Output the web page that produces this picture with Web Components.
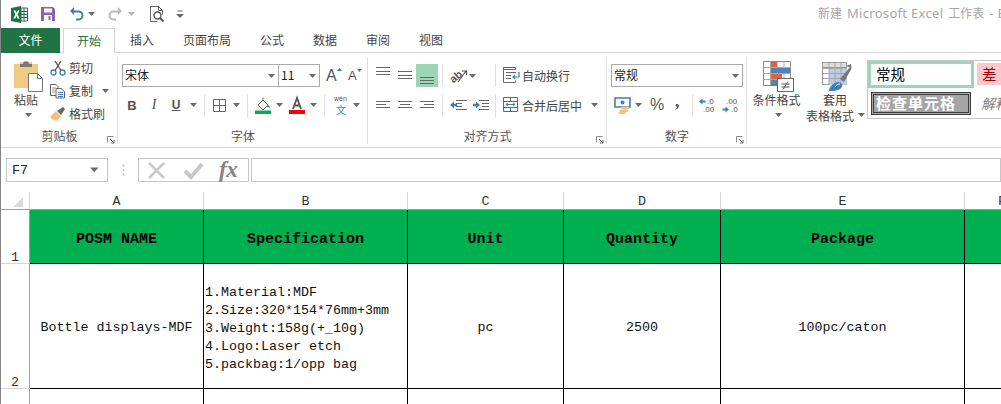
<!DOCTYPE html>
<html lang="zh"><head><meta charset="utf-8"><title>Excel</title>
<style>
html,body{margin:0;padding:0;background:#fff;overflow:hidden;width:1001px;height:404px}
body{font:12px "Noto Sans CJK SC","Noto Sans",sans-serif;color:#444}
</style></head><body>
<x-app>
  <x-titlebar></x-titlebar>
  <x-tabs></x-tabs>
  <x-ribbon>
    <x-group w="117" label="剪贴板" launcher="1">
      <x-row>
        <x-col w="30" style="margin-left:13px">
          <x-i n="paste" w="30" h="30" style="margin-top:5px"></x-i>
          <x-t style="width:30px;line-height:18px">粘贴</x-t>
          <x-i n="caret" w="7" h="4" style="margin-top:4px;margin-left:-2px"></x-i>
        </x-col>
        <x-col w="70" style="margin-left:6px;align-items:flex-start">
          <x-row h="23"><x-i n="cut" w="16" h="16"></x-i><x-t style="margin-left:3px">剪切</x-t></x-row>
          <x-row h="23"><x-i n="copy" w="16" h="16"></x-i><x-t style="margin-left:3px">复制</x-t><x-i n="caret" w="7" h="4" style="margin-left:9px"></x-i></x-row>
          <x-row h="23"><x-i n="brush" w="16" h="16"></x-i><x-t style="margin-left:3px">格式刷</x-t></x-row>
        </x-col>
      </x-row>
    </x-group>
    <x-group w="250" label="字体">
      <x-col style="align-items:flex-start">
        <x-row h="23" style="margin-top:8px">
          <x-combo w="157" text="宋体" style="margin-left:4px"></x-combo>
          <x-combo w="42" text="11" style="margin-left:-1px"></x-combo>
          <x-t style="margin-left:6px;width:15px;font:16px 'Liberation Sans';color:#555;position:relative">A<x-i n="tri-up" w="5" h="3" style="position:absolute;right:-1px;top:1px"></x-i></x-t>
          <x-t style="margin-left:7px;width:15px;font:13px 'Liberation Sans';color:#555;position:relative">A<x-i n="tri-down" w="5" h="3" style="position:absolute;right:1px;top:1px"></x-i></x-t>
        </x-row>
        <x-row h="22" style="margin-top:7px">
          <x-t style="margin-left:3px;width:22px;text-align:center;font:bold 13px 'Liberation Sans';color:#555">B</x-t>
          <x-t style="width:22px;text-align:center;font:italic 14px 'Liberation Serif';color:#555">I</x-t>
          <x-t style="width:22px;text-align:center;font:bold 12px 'Liberation Sans';color:#555;text-decoration:underline">U</x-t>
          <x-i n="caret" w="7" h="4" style="margin-left:3px"></x-i>
          <x-sep style="margin-left:7px"></x-sep>
          <x-i n="borders" w="13" h="13" style="margin-left:8px"></x-i>
          <x-i n="caret" w="7" h="4" style="margin-left:7px"></x-i>
          <x-sep style="margin-left:7px"></x-sep>
          <x-i n="fill" w="17" h="17" style="margin-left:7px"></x-i>
          <x-i n="caret" w="7" h="4" style="margin-left:4px"></x-i>
          <x-i n="fontcolor" w="16" h="17" style="margin-left:6px"></x-i>
          <x-i n="caret" w="7" h="4" style="margin-left:5px"></x-i>
          <x-sep style="margin-left:7px"></x-sep>
          <x-i n="wen" w="14" h="17" style="margin-left:9px"></x-i>
          <x-i n="caret" w="7" h="4" style="margin-left:5px"></x-i>
        </x-row>
      </x-col>
    </x-group>
    <x-group w="239" label="对齐方式" launcher="1">
      <x-col style="align-items:flex-start">
        <x-row h="23" style="margin-top:8px">
          <x-i n="al-top" w="14" h="23" style="margin-left:8px"></x-i>
          <x-i n="al-mid" w="14" h="23" style="margin-left:8px"></x-i>
          <x-i n="al-bot" w="22" h="23" style="margin-left:4px;background:#9fd5b7"></x-i>
          <x-sep style="margin-left:4px"></x-sep>
          <x-i n="orient" w="18" h="17" style="margin-left:7px"></x-i>
          <x-i n="caret" w="7" h="4" style="margin-left:1px"></x-i>
          <x-sep style="margin-left:19px"></x-sep>
          <x-i n="wrap" w="17" h="17" style="margin-left:7px"></x-i>
          <x-t style="margin-left:2px">自动换行</x-t>
        </x-row>
        <x-row h="22" style="margin-top:7px">
          <x-i n="h-left" w="14" h="22" style="margin-left:8px"></x-i>
          <x-i n="h-mid" w="14" h="22" style="margin-left:8px"></x-i>
          <x-i n="h-right" w="14" h="22" style="margin-left:8px"></x-i>
          <x-sep style="margin-left:8px"></x-sep>
          <x-i n="ind-l" w="17" h="12" style="margin-left:7px"></x-i>
          <x-i n="ind-r" w="16" h="12" style="margin-left:6px"></x-i>
          <x-sep style="margin-left:6px"></x-sep>
          <x-i n="merge" w="16" h="16" style="margin-left:7px"></x-i>
          <x-t style="margin-left:3px">合并后居中</x-t>
          <x-i n="caret" w="7" h="4" style="margin-left:9px"></x-i>
        </x-row>
      </x-col>
    </x-group>
    <x-group w="140" label="数字" launcher="1">
      <x-col style="align-items:flex-start">
        <x-row h="23" style="margin-top:8px"><x-combo w="132" text="常规" style="margin-left:4px"></x-combo></x-row>
        <x-row h="22" style="margin-top:7px">
          <x-i n="currency" w="17" h="17" style="margin-left:7px"></x-i>
          <x-i n="caret" w="7" h="4" style="margin-left:4px"></x-i>
          <x-t style="margin-left:8px;width:14px;font:16px 'Liberation Sans';color:#555">%</x-t>
          <x-t style="margin-left:11px;width:8px;font:bold 18px 'Liberation Serif';color:#555;line-height:14px;padding-bottom:8px">,</x-t>
          <x-sep style="margin-left:9px"></x-sep>
          <x-i n="dec-inc" w="17" h="16" style="margin-left:6px"></x-i>
          <x-i n="dec-dec" w="17" h="16" style="margin-left:6px"></x-i>
        </x-row>
      </x-col>
    </x-group>
    <x-group w="254" plain="1">
      <x-row>
        <x-col w="49" style="margin-left:5px">
          <x-i n="cond" w="31" h="30" style="margin-top:5px;margin-left:3px"></x-i>
          <x-t style="line-height:18px;white-space:nowrap">条件格式</x-t>
          <x-i n="caret" w="7" h="4" style="margin-top:4px;margin-left:4px"></x-i>
        </x-col>
        <x-col w="58" style="margin-left:5px;align-items:flex-start">
          <x-i n="table" w="30" h="29" style="margin-top:6px;margin-left:16px"></x-i>
          <x-t style="line-height:18px;margin-left:17px">套用</x-t>
          <x-row h="14" style="margin-top:-1px"><x-t>表格格式</x-t><x-i n="caret" w="7" h="4" style="margin-left:4px"></x-i></x-row>
        </x-col>
        <x-gallery style="margin-left:3px;margin-top:4px"></x-gallery>
      </x-row>
    </x-group>
  </x-ribbon>
  <x-formula name="F7"></x-formula>
  <x-sheet></x-sheet>
</x-app>
<script>
const lines=(ys,x1,x2,c='#666')=>ys.map(y=>`<path d="M${x1} ${y+.5}H${x2}" stroke="${c}"/>`).join('');
const ICONS={
 caret:`<path d="M0 0h7L3.5 4z" fill="#6a6a6a"/>`,
 'tri-up':`<path d="M0 3h5L2.5 0z" fill="#3a7ab8"/>`,
 'tri-down':`<path d="M0 0h5L2.5 3z" fill="#3a7ab8"/>`,
 excel:`<path d="M0 2 10 0v17L0 15z" fill="#1e7145"/><path d="M10 2h6.5v13H10z" fill="#fff" stroke="#1e7145"/><path d="M10 5.5h6M10 8.5h6M10 11.5h6M13 2v13" stroke="#1e7145"/><path d="M2.5 4.5h2l1 2.3 1.100-2.300h1.900L6.600 8.400l2 4h-2L5.400 10l-1.200 2.400h-1.900l2.100-4z" fill="#fff"/>`,
 save:`<path d="M0 0h12l2 2v12H0z" fill="#8a63ad"/><path d="M3 1.500h8v4H3z" fill="#fff"/><path d="M3 8h8v6H3z" fill="#fff"/><path d="M7.500 9h2v4h-2z" fill="#8a63ad"/>`,
 undo:`<path d="M5 1 1 5l4 4V6.400h4.500a3 3 0 0 1 0 6H7v2h2.500a5 5 0 0 0 0-10H5z" fill="#3d7ebb"/>`,
 redo:`<path d="M9 1l4 4-4 4V6.400H4.500a3 3 0 0 0 0 6H7v2H4.500a5 5 0 0 1 0-10H9z" fill="#bcbcbc"/>`,
 preview:`<path d="M.5 .5h8l4 4v4M.5 .5v15h7" fill="none" stroke="#666"/><path d="M8.500 .5v4h4" fill="none" stroke="#666"/><circle cx="7.500" cy="9.500" r="3.500" fill="#fff" stroke="#555" stroke-width="1.400"/><path d="M10 12l3.500 3.500" stroke="#555" stroke-width="2"/>`,
 qat:`<path d="M1.500 1h5" stroke="#666"/><path d="M0 4h8L4 8z" fill="#666"/>`,
 paste:`<path d="M0 3h6V1h12v2h6v24H0z" fill="#f0cb85"/><path d="M6 3h3l1-2.500h4L15 3h3v3H6z" fill="#777"/><path d="M14.500 12.500h9l5 5v13h-14z" fill="#fff" stroke="#777"/><path d="M23.500 12.500v5h5" fill="none" stroke="#777"/>`,
 cut:`<circle cx="3.500" cy="12.500" r="2.500" fill="none" stroke="#3d7ebb" stroke-width="1.300"/><circle cx="12.500" cy="12.500" r="2.500" fill="none" stroke="#3d7ebb" stroke-width="1.300"/><path d="M5 10.500 11 1M11 10.500 5 1" stroke="#555" stroke-width="1.400"/>`,
 copy:`<path d="M.5 1.500h5.500l2 2v9h-7.500z" fill="#fff" stroke="#666"/><path d="M6 5.500h5l3.500 3v6.500H6z" fill="#fff" stroke="#666"/><path d="M8 9.500h5M8 11.500h5M8 13.500h5" stroke="#3d7ebb"/><path d="M2 5h4M2 7h3M2 9h3" stroke="#999"/>`,
 brush:`<path d="M0 11 6 5l5 5-4 5-2-1-1 1-1-2-1 .5z" fill="#eec27b"/><path d="M7 5 13 1l2 2-4 6z" fill="#666"/>`,
 borders:`<path d="M.5 .5h12v12H.5zM6.500 .5v12M.5 6.500h12" fill="none" stroke="#666"/>`,
 fill:`<path d="M3 8 8 3l5 5-5 5z" fill="#fff" stroke="#666"/><path d="M8 .5v4" stroke="#666"/><path d="M12 8c2 0 3 1 3 3-1-1-2-1-3-1z" fill="#3d7ebb"/><path d="M0 13.500h16V17H0z" fill="#00b050"/>`,
 fontcolor:`<path d="M0 13h16v4H0z" fill="#f00"/><path d="M4 12 8 1l4 11M5.500 8.500h5" fill="none" stroke="#555" stroke-width="1.800"/>`,
 wen:`<text x="0" y="4" font-size="7" font-family="Liberation Sans" fill="#555">wén</text><text x="2" y="17" font-size="10" font-family="Noto Sans CJK SC" fill="#3d7ebb">文</text>`,
 'al-top':`<g transform="translate(0,3)">${lines([0,4,7],0,14)}</g>`,
 'al-mid':`<g transform="translate(0,7)">${lines([0,4,7],0,14)}</g>`,
 'al-bot':`<g transform="translate(4,13)">${lines([0,3,6],0,14)}</g>`,
 'h-left':`<g transform="translate(0,7)"><path d="M0 .5H14M0 3.500H10M0 6.500H14" stroke="#666"/></g>`,
 'h-mid':`<g transform="translate(0,7)"><path d="M0 .5H14M2 3.500H12M0 6.500H14" stroke="#666"/></g>`,
 'h-right':`<g transform="translate(0,7)"><path d="M0 .5H14M4 3.500H14M0 6.500H14" stroke="#666"/></g>`,
 orient:`<text x="-1" y="13" font-size="11" font-family="Liberation Sans" font-weight="bold" fill="#555" transform="rotate(-40 6 9)">ab</text><path d="M8 15 16 4M12 4h4.500v4" fill="none" stroke="#555" stroke-width="1.200"/>`,
 wrap:`<path d="M.5 .5h12v2H.5zM.5 .5v15h12v-2" fill="none" stroke="#666"/><path d="M3 5.500h10M3 8.500h5M3 11.500h5" stroke="#666"/><path d="M16 5v5h-6M12 8l-2 2 2 2" fill="none" stroke="#3d7ebb" stroke-width="1.200"/>`,
 'ind-l':`<path d="M5 4.500h6M5 7.500h6M5 1.500h11M5 10.500h11" transform="translate(1 0)" stroke="#666"/><path d="M0 6l4-3.500v2.200h3v2.600H4v2.200z" fill="#3d7ebb"/>`,
 'ind-r':`<path d="M6 1.500h10M9 4.500h7M9 7.500h7M6 10.500h10" stroke="#666"/><path d="M7 6 3 2.500v2.200H0v2.600h3v2.200z" fill="#3d7ebb"/>`,
 merge:`<path d="M.5 .5h14v14H.5zM.5 4.500h14M.5 10.500h14M7.500 .5v4M7.500 10.500v4" fill="none" stroke="#666"/><path d="M3 7.500h9M3 7.500l2-1.500M3 7.500l2 1.500M12 7.500l-2-1.500M12 7.500l-2 1.500" fill="none" stroke="#3d7ebb"/>`,
 currency:`<path d="M1 1h15v9H1z" fill="none" stroke="#3d7ebb" stroke-width="1.600"/><circle cx="8.500" cy="5.500" r="2" fill="#3d7ebb"/><ellipse cx="11" cy="11" rx="4.500" ry="1.400" fill="#eec27b"/><ellipse cx="9.500" cy="14" rx="4.500" ry="1.400" fill="#eec27b"/><ellipse cx="8" cy="16" rx="4" ry="1" fill="#eec27b"/>`,
 'dec-inc':`<path d="M0 4.500 3.500 1.500v2h3v2h-3v2z" fill="#3d7ebb"/><text x="8" y="7" font-size="8" font-family="Liberation Sans" fill="#555">.0</text><text x="4" y="15" font-size="8" font-family="Liberation Sans" fill="#555">.00</text>`,
 'dec-dec':`<text x="4" y="7" font-size="8" font-family="Liberation Sans" fill="#555">.00</text><path d="M7 12.500 3.500 9.500v2h-3v2h3v2z" fill="#3d7ebb"/><text x="9" y="15" font-size="8" font-family="Liberation Sans" fill="#555">.0</text>`,
 cond:`<path d="M.5 .5h27v24H.5z" fill="#fff" stroke="#888"/><path d="M.5 6.500h27M.5 12.500h27M.5 18.500h27M7.500 .5v24M14 .5v24M21 .5v24" stroke="#aaa"/><path d="M8 1h6v5H8z" fill="#e0633c"/><path d="M8 7h19v5H8z" fill="#4f81bd"/><path d="M8 13h11v5H8z" fill="#e0633c"/><path d="M8 19h6v6H8z" fill="#4f81bd"/><path d="M14.500 17.500h16v13h-16z" fill="#fff" stroke="#666"/><path d="M18.500 23h8M18.500 26h8M25 20.500l-5 8" stroke="#555" fill="none"/>`,
 table:`<path d="M.5 .5h24v22H.5z" fill="#fff" stroke="#999"/><path d="M.5 .5h24v5H.5z" fill="#ddd" stroke="#999"/><path d="M7 6h18v17H7z" fill="#b9cde5"/><path d="M.5 6.500h24M.5 11.500h24M.5 16.500h24M7 .5v22M13 .5v22M19 .5v22" stroke="#a9a9a9"/><path d="M18 17 28 5l1.500 1.500L22 20z" fill="#777"/><path d="M24 4 29 2l.5 4z" fill="#777"/><path d="M7 29c0-4 3-6 6-8 3-2 5-1 7 1 1 2-1 5-4 6-3 1-6 1-9 1z" fill="#3d7ebb"/><path d="M13 25c1-2 3-3 5-3" stroke="#fff" fill="none"/>`,
 cross:`<path d="M1 1l15 15M16 1 1 16" stroke="#c8c8c8" stroke-width="2.500"/>`,
 check:`<path d="M1 9l6 6L18 2" fill="none" stroke="#c8c8c8" stroke-width="4"/>`,
 launcher:`<path d="M.5 .5h6M.5 .5v6" stroke="#8a8a8a" fill="none"/><path d="M3 3l4 4M7 4v3H4" stroke="#666" fill="none"/>`,
 corner:`<path d="M10 0v10H0z" fill="#dcdcdc"/>`,
 dots:`<circle cx="1.500" cy="1.500" r="1" fill="#b5b5b5"/><circle cx="1.500" cy="6" r="1" fill="#b5b5b5"/><circle cx="1.500" cy="10.500" r="1" fill="#b5b5b5"/>`
};
const def=(name,fn)=>customElements.define(name,class extends HTMLElement{
  constructor(){super();this.attachShadow({mode:'open'});}
  connectedCallback(){this.shadowRoot.innerHTML=fn(this);}
});
def('x-i',e=>{const w=e.getAttribute('w'),h=e.getAttribute('h');
  return `<style>:host{display:block;flex:none;width:${w}px;height:${h}px;line-height:0}svg{display:block;overflow:visible}</style><svg width="${w}" height="${h}" viewBox="0 0 ${w} ${h}">${ICONS[e.getAttribute('n')]}</svg>`;});
def('x-t',()=>`<style>:host{display:block;flex:none;white-space:nowrap;color:#444}</style><slot></slot>`);
def('x-sep',()=>`<style>:host{display:block;flex:none;width:1px;height:23px;background:#e1e1e1}</style>`);
def('x-row',e=>{const h=e.getAttribute('h');return `<style>:host{display:flex;flex:none;${h?`height:${h}px;align-items:center;`:'align-items:flex-start;'}}</style><slot></slot>`;});
def('x-col',e=>{const w=e.getAttribute('w');return `<style>:host{display:flex;flex-direction:column;align-items:center;flex:none;${w?`width:${w}px;`:''}}</style><slot></slot>`;});
def('x-combo',e=>`<style>:host{display:flex;flex:none;align-items:center;box-sizing:border-box;width:${e.getAttribute('w')}px;height:23px;border:1px solid #ababab;background:#fff;color:#222;padding:0 3px 0 2px}
  span{flex:1;font-size:12px;margin-top:-2px}</style><span>${e.getAttribute('text')}</span><x-i n="caret" w="7" h="4"></x-i>`);
def('x-group',e=>`<style>:host{display:flex;flex-direction:column;flex:none;position:relative;width:${e.getAttribute('w')}px;height:94px}
  .c{flex:1;padding-top:3px;min-height:0}
  .l{height:20px;line-height:18px;text-align:center;color:#555;font-size:12px}
  .s{position:absolute;right:0;top:4px;bottom:3px;width:1px;background:#e1e1e1}
  .k{position:absolute;right:3px;bottom:3px}</style>
  <div class="c"><slot></slot></div>${e.getAttribute('label')?`<div class="l">${e.getAttribute('label')}</div>`:''}
  ${e.getAttribute('plain')?'':'<div class="s"></div>'}${e.getAttribute('launcher')?'<x-i class="k" n="launcher" w="8" h="8"></x-i>':''}`);
def('x-ribbon',()=>`<style>:host{display:flex;height:94px;border-bottom:1px solid #d4d4d4;overflow:hidden;width:1000px}</style><slot></slot>`);
def('x-app',()=>`<style>:host{display:block;width:1000px;height:404px;border-left:1px solid #848484;overflow:hidden}</style><slot></slot>`);
def('x-titlebar',()=>`<style>:host{display:flex;align-items:center;height:28px;position:relative}
  .cap{margin-left:auto;width:183px;overflow:hidden;white-space:nowrap;color:#a6a6a6;font-size:12px;padding-bottom:2px}
  .cap span{font:13px "Noto Sans",sans-serif;letter-spacing:.3px;margin:0 5px}
  .cap span+span{margin-left:5px}</style>
  <x-i n="excel" w="17" h="17" style="margin-left:10px"></x-i>
  <x-i n="save" w="14" h="14" style="margin-left:13px"></x-i>
  <x-i n="undo" w="15" h="16" style="margin-left:14px"></x-i>
  <x-i n="caret" w="7" h="4" style="margin-left:4px"></x-i>
  <x-i n="redo" w="15" h="16" style="margin-left:14px"></x-i>
  <x-i n="caret" w="7" h="4" style="margin-left:4px;opacity:.5"></x-i>
  <x-i n="preview" w="15" h="16" style="margin-left:15px"></x-i>
  <x-i n="qat" w="8" h="8" style="margin-left:11px"></x-i>
  <div class="cap">新建<span>Microsoft Excel</span>工作表<span>- Excel</span></div>`);
def('x-tabs',()=>{const t=[['插入',130],['页面布局',183],['公式',260],['数据',313],['审阅',366],['视图',419]];
  let h='',x=115;for(const [n,p] of t){h+=`<span style="margin-left:${p-x}px">${n}</span>`;x=p+n.length*12;}
  return `<style>:host{display:flex;align-items:center;box-sizing:border-box;height:25px;padding-bottom:2px;border-bottom:1px solid #d4d4d4;position:relative;font-size:12px;color:#444}
  .f{box-sizing:border-box;padding-bottom:2px;width:59px;height:25px;background:#217346;color:#fff;display:flex;align-items:center;justify-content:center;flex:none;align-self:flex-start}
  .a{box-sizing:border-box;padding-bottom:2px;width:52px;height:25px;margin-left:3px;border:1px solid #d4d4d4;border-bottom:0;background:#fff;color:#217346;display:flex;align-items:center;justify-content:center;flex:none;align-self:flex-start}
  span{flex:none}</style><div class="f">文件</div><div class="a">开始</div>${h}`;});
def('x-gallery',()=>`<style>:host{display:block;flex:none;box-sizing:border-box;width:140px;height:59px;border:1px solid #c6c6c6;border-right:0;overflow:hidden;font-family:"Noto Sans CJK SC",sans-serif}
  .r{display:flex}
  .n{box-sizing:border-box;width:106px;height:27px;border:3px solid #9fd5b7;color:#000;font-size:14.5px;line-height:19px;padding-left:5px;flex:none}
  .b{width:30px;height:22px;margin:2px 0 0 3px;background:#ffc7ce;color:#9c0006;font-size:14.5px;line-height:22px;padding-left:5px;box-sizing:border-box;flex:none}
  .k{box-sizing:border-box;width:100px;height:23px;margin:4px 0 0 3px;background:#a5a5a5;border:3px double #3f3f3f;color:#fff;font-weight:bold;font-size:15px;line-height:16px;letter-spacing:1px;padding-left:2px;flex:none;white-space:nowrap}
  .e{margin:5px 0 0 10px;color:#7f7f7f;font-style:italic;font-size:14px;line-height:20px;white-space:nowrap;flex:none}</style>
  <div class="r"><div class="n">常规</div><div class="b">差</div></div>
  <div class="r"><div class="k">检查单元格</div><div class="e">解释性</div></div>`);
def('x-formula',e=>`<style>:host{display:flex;height:24px;margin-top:10px;align-items:stretch}
  .box{box-sizing:border-box;border:1px solid #c6c6c6;background:#fff;flex:none;display:flex;align-items:center}
  .nm{width:102px;margin-left:5px;padding:0 7px 0 5px;font:13.33px "Liberation Mono",monospace;color:#222;justify-content:space-between}
  .fb{width:111px}
  .fx{font:italic bold 23px "Liberation Serif",serif;color:#858585;margin-left:16px;letter-spacing:-.5px;line-height:22px}
  .inp{flex:1;margin-left:2px}</style>
  <div class="box nm"><span>${e.getAttribute('name')}</span><x-i n="caret" w="9" h="5" style="transform:scale(1.200)"></x-i></div>
  <x-i n="dots" w="3" h="12" style="margin:6px 13px 0 14px"></x-i>
  <div class="box fb"><x-i n="cross" w="17" h="17" style="margin-left:9px"></x-i><x-i n="check" w="19" h="17" style="margin-left:19px"></x-i><span class="fx">fx</span></div>
  <div class="box inp"></div>`);
def('x-sheet',()=>`<style>:host{display:block;margin-top:10px;font:13.33px "Liberation Mono",monospace;color:#222;height:212px;overflow:hidden}
  .g{display:grid;grid-template-columns:29px 174px 204px 156px 157px 244px 75px;grid-template-rows:18px 54px 125px 20px;width:1040px}
  .g>div{box-sizing:border-box;display:flex;align-items:center;justify-content:center;white-space:nowrap;overflow:hidden}
  .ch{border-right:1px solid #d4d4d4;border-bottom:1px solid #9f9f9f;color:#333;padding-top:2px}
  .rh{border-right:1px solid #9f9f9f;border-bottom:1px solid #d4d4d4;align-items:flex-end!important;color:#333;line-height:17px}
  .rh span{position:relative;top:3px}
  .corner{border-right:1px solid #d4d4d4;border-bottom:1px solid #9f9f9f;padding:0 0 2px 5px;align-items:flex-end!important}
  .c{border-right:1px solid #000;border-bottom:1px solid #000;color:#111;padding-top:2px}
  .h{background:#00b050;color:#000;font:bold 15px "Liberation Mono",monospace;padding-top:5px}
  .sp{padding-left:1px;line-height:18px;display:block!important;padding-top:20px}
  .sp div{height:18px}</style>
  <div class="g">
   <div class="corner"><x-i n="corner" w="10" h="10"></x-i></div>
   <div class="ch">A</div><div class="ch">B</div><div class="ch">C</div><div class="ch">D</div><div class="ch">E</div><div class="ch">F</div>
   <div class="rh"><span>1</span></div>
   <div class="c h">POSM NAME</div><div class="c h">Specification</div><div class="c h">Unit</div><div class="c h">Quantity</div><div class="c h">Package</div><div class="c h"></div>
   <div class="rh"><span>2</span></div>
   <div class="c">Bottle displays-MDF</div>
   <div class="c sp"><div>1.Material:MDF</div><div>2.Size:320*154*76mm+3mm</div><div>3.Weight:158g(+_10g)</div><div>4.Logo:Laser etch</div><div>5.packbag:1/opp bag</div></div>
   <div class="c">pc</div><div class="c">2500</div><div class="c">100pc/caton</div><div class="c"></div>
   <div class="rh"></div><div class="c"></div><div class="c"></div><div class="c"></div><div class="c"></div><div class="c"></div><div class="c"></div>
  </div>`);
</script>
</body></html>
